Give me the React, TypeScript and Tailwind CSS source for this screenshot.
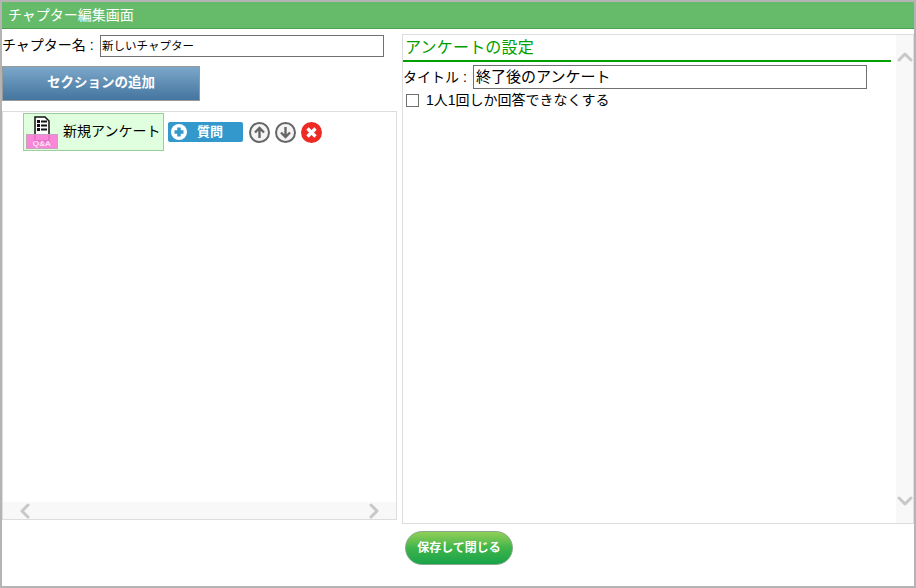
import { ChevronDown, ChevronLeft, ChevronRight, ChevronUp } from 'lucide-react'

const font = { fontFamily: '"Liberation Sans", "Noto Sans CJK JP", sans-serif' }

function QaIcon() {
  return (
    <div className="relative w-[34px] h-[30px] shrink-0">
      <svg className="absolute left-[10px] top-0" width="16" height="26" viewBox="0 0 16 26">
        <path d="M1 1h10l4 4v20H1z" fill="#fff" stroke="#111" strokeWidth="1.5" />
        <path d="M3 4h3v3H3zM3 8h3v3H3zM3 12h3v3H3z" fill="#111" />
        <path d="M7 5.500h6M7 9.500h6M7 13.500h6" stroke="#111" strokeWidth="2" />
      </svg>
      <div className="absolute left-[2px] top-[18px] w-[32px] h-[15px] bg-[#fb7ad6]/90 border border-[#c8a0c0] text-white text-[8px] tracking-[0.5px] leading-[17px] text-center">
        Q&amp;A
      </div>
    </div>
  )
}

function ArrowButton({ down }: { down?: boolean }) {
  return (
    <svg width="21" height="21" viewBox="0 0 21 21">
      <circle cx="10.5" cy="10.5" r="9.500" fill="#f4f4f4" stroke="#666" strokeWidth="2" />
      <path
        d={down ? 'M10.5 5v10M6 10.5l4.500 4.500 4.500-4.500' : 'M10.5 16V6M6 10.500l4.500-4.500 4.500 4.500'}
        fill="none"
        stroke="#666"
        strokeWidth="2.400"
      />
    </svg>
  )
}

export default function App() {
  return (
    <div
      className="w-[916px] h-[588px] bg-white border-2 border-[#b4b4b4] flex flex-col overflow-hidden text-black"
      style={font}
    >
      {/* Title bar */}
      <div className="h-[27px] shrink-0 bg-[#66bb6a] border-b border-[#4da050] px-[6px] text-[14px] leading-[26px] text-white">
        チャプター編集画面
      </div>

      <div className="flex gap-[5px] pt-[5px]">
        {/* Left column */}
        <div className="w-[395px] shrink-0 flex flex-col">
          <div className="flex items-center h-[23px]">
            <span className="text-[14px] w-[98px] whitespace-nowrap">チャプター名 :</span>
            <input
              readOnly
              value="新しいチャプター"
              className="w-[284px] h-[22px] border border-[#707070] px-[1px] pb-[2px] text-[11.500px] outline-none"
            />
          </div>

          <button className="mt-[9px] w-[198px] h-[35px] border border-[#999] bg-gradient-to-b from-[#7ba7c9] to-[#44759f] text-white text-[13.500px] font-bold">
            セクションの追加
          </button>

          <div className="mt-[10px] h-[409px] border border-[#dddddd] flex flex-col">
            <div className="flex-1 pl-[20px] pt-[1px]">
              <div className="flex items-start">
                <div className="w-[141px] h-[38px] bg-[#dfffdf] border border-[#9ccf9c] flex items-center">
                  <div className="-mt-[3px]">
                    <QaIcon />
                  </div>
                  <span className="ml-[5px] pb-[2px] text-[14px] whitespace-nowrap">新規アンケート</span>
                </div>
                <div className="ml-[4px] mt-[9px] w-[75px] h-[20px] bg-[#3399cc] rounded-[2px] flex items-center text-white">
                  <svg className="ml-[2px]" width="18" height="18" viewBox="0 0 18 18">
                    <circle cx="9" cy="9" r="8" fill="#fff" />
                    <path d="M9 4.500v9M4.500 9h9" stroke="#3399cc" strokeWidth="3.500" />
                  </svg>
                  <span className="ml-[9px] text-[13px] font-bold">質問</span>
                </div>
                <div className="ml-[6px] mt-[9px] flex gap-[5px]">
                  <ArrowButton />
                  <ArrowButton down />
                  <svg width="21" height="21" viewBox="0 0 21 21">
                    <circle cx="10.500" cy="10.500" r="10.500" fill="#ee2a24" />
                    <path d="M6.500 6.500l8 8M14.500 6.500l-8 8" stroke="#fff" strokeWidth="3.400" />
                  </svg>
                </div>
              </div>
            </div>
            {/* Horizontal scrollbar */}
            <div className="h-[17px] bg-[#f8f8f8] flex items-center justify-between px-[10px] text-[#c8c8c8]">
              <ChevronLeft size={24} strokeWidth={3} className="shrink-0" />
              <ChevronRight size={24} strokeWidth={3} className="shrink-0" />
            </div>
          </div>
        </div>

        {/* Right panel */}
        <div className="w-[512px] h-[490px] border border-[#dddddd] flex">
          <div className="flex-1 pt-[1px]">
            <div className="h-[26px] mr-[5px] border-b-2 border-[#00a000] px-[2px] text-[16px] tracking-[0.2px] leading-[24px] text-[#00a000]">
              アンケートの設定
            </div>
            <div className="flex items-center h-[24px] mt-[3px]">
              <span className="text-[14px] w-[70px] whitespace-nowrap">タイトル :</span>
              <input
                readOnly
                value="終了後のアンケート"
                className="w-[394px] h-[24px] border border-[#707070] px-[2px] pb-[3px] text-[15px] outline-none"
              />
            </div>
            <label className="flex items-center h-[22px] pl-[3px]">
              <span className="w-[13px] h-[13px] border border-[#707070] bg-white" />
              <span className="ml-[7px] text-[14px]">1人1回しか回答できなくする</span>
            </label>
          </div>
          {/* Vertical scrollbar */}
          <div className="w-[17px] bg-[#f8f8f8] flex flex-col justify-between items-center py-[10px] text-[#c8c8c8]">
            <ChevronUp size={24} strokeWidth={3} className="shrink-0" />
            <ChevronDown size={24} strokeWidth={3} className="shrink-0" />
          </div>
        </div>
      </div>

      {/* Footer */}
      <div className="pl-[403px] pt-[7px]">
        <button className="w-[108px] h-[34px] rounded-full border border-[#8aa88a] bg-gradient-to-b from-[#8fcf58] via-[#3db54a] to-[#16a34a] text-white text-[12px] font-bold">
          保存して閉じる
        </button>
      </div>
    </div>
  )
}
